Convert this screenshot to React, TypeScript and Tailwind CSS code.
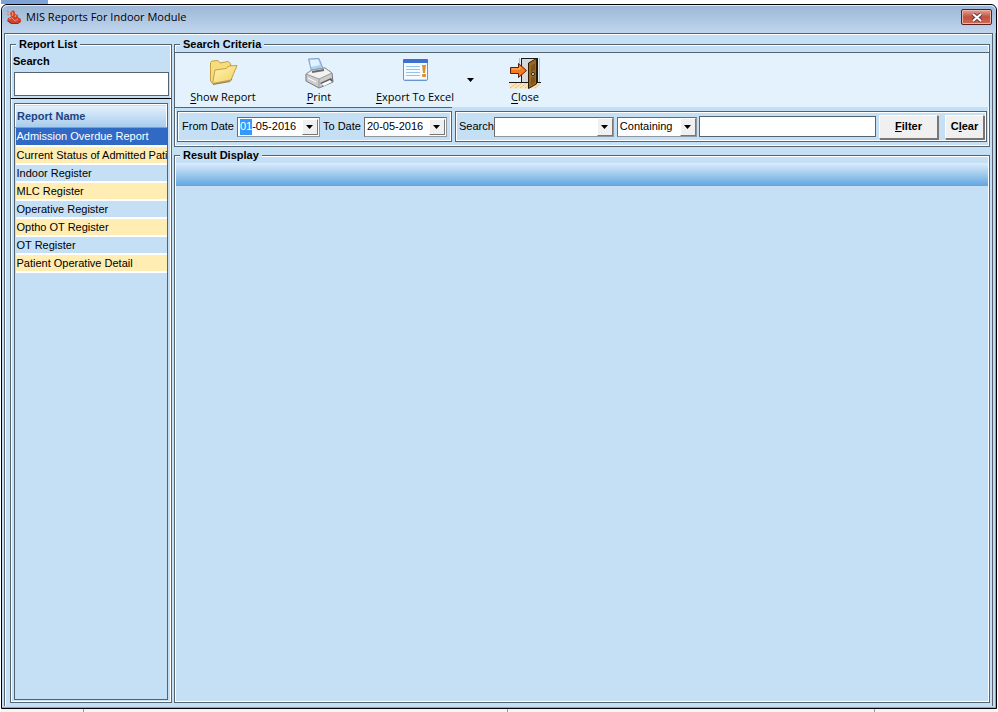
import { useEffect, useRef, useState } from "react";

const reports = [
  "Admission Overdue Report",
  "Current Status of Admitted Pati",
  "Indoor Register",
  "MLC Register",
  "Operative Register",
  "Optho OT Register",
  "OT Register",
  "Patient Operative Detail",
];

const groupBox =
  "min-w-0 border border-[#566470] shadow-[inset_0_0_0_1px_#ffffff]";
const legend = "ml-[5px] bg-[#c5dff4] px-[3px] text-[11px]/[15px] font-bold";
const sunken =
  "border border-t-[#6b6b6b] border-l-[#6b6b6b] border-r-[#8f979e] border-b-[#8f979e] bg-white";
const raised =
  "border border-t-white border-l-white border-r-[#777777] border-b-[#777777] bg-[#f0f0f0]";

function AppIcon() {
  return (
    <svg width="16" height="16" viewBox="0 0 16 16">
      <path d="M1 12 L2 9 L5 8 L4 4 L7 1 L9 3 L9 5 L12 6 L12 8 L15 10 L15 13 L12 15 L5 15 Z" fill="#d2452c" />
      <path d="M6 3 L7 5 L6 7 M10 6 L9 8" stroke="#f3a182" fill="none" />
      <path d="M3 10 L6 9 L9 12 L12 10" stroke="#ee8a6a" fill="none" />
      <path d="M1 2 L3 3 M1 5 L3 6" stroke="#d98b78" strokeWidth="1.5" />
      <path d="M2 12 L6 14.5 L12 14.5 L14 12" stroke="#98271a" fill="none" />
    </svg>
  );
}

function FolderIcon() {
  return (
    <svg width="32" height="32" viewBox="0 0 32 32">
      <defs>
        <linearGradient id="folderFront" x1="0" y1="0" x2="1" y2="1">
          <stop offset="0" stopColor="#fff6b8" />
          <stop offset="1" stopColor="#f3cf5f" />
        </linearGradient>
      </defs>
      <path d="M3.5 5.5 L5 4 L11 3.5 L13 6 L21 4.5 L23.5 6.5 L24 11 L22 24 L6 27 L3.5 24 Z" fill="#f7dc7c" stroke="#c59f45" />
      <path d="M5.5 26.5 L8 13 L19 11.5 L22 9 L30 8.5 L24 23 Z" fill="url(#folderFront)" stroke="#c59f45" />
      <path d="M6 27.5 L23 24.5 L25 22" stroke="#8f8061" fill="none" />
    </svg>
  );
}

function PrinterIcon() {
  return (
    <svg width="32" height="32" viewBox="0 0 32 32">
      <path d="M5.5 2 L16 1.5 L21 14 L9 16 Z" fill="#a9d2fa" stroke="#7d9fd0" />
      <path d="M7 3 L15 2.5 L17 8 L8 10 Z" fill="#e3f2ff" />
      <path d="M3 17 L9 13 L22 11 L29 16 L30 25 L16 31 L3 24 Z" fill="#cdcdcd" stroke="#777777" />
      <path d="M3 17 L9 13 L22 11 L29 16 L16 22 Z" fill="#f2f2f2" stroke="#999999" />
      <path d="M9 15 L21 13" stroke="#666b72" strokeWidth="2" />
      <path d="M16 22 L16 30" stroke="#999999" />
      <path d="M17 26 L28 21 L30 24 L20 29 Z" fill="#55585e" />
      <path d="M18 27 L27 23 L29 25 L21 29 Z" fill="#fafafa" />
      <path d="M5 21 L13 25" stroke="#ffffff" />
    </svg>
  );
}

function ExportIcon() {
  return (
    <svg width="32" height="32" viewBox="0 0 32 32">
      <rect x="4.5" y="2.5" width="24" height="21" rx="1.5" fill="#f5faff" stroke="#6a93d2" />
      <rect x="4" y="2" width="25" height="4" rx="1" fill="#3c6fd0" />
      <path d="M7 9.5 H21 M7 12.5 H21 M7 15.5 H21 M7 18.5 H21" stroke="#93c3e8" />
      <path d="M5 22.5 H28" stroke="#c0d8ef" />
      <path d="M23 8 H27 L26 16 H24 Z" fill="#dc912e" />
      <rect x="23" y="17" width="4" height="3" rx="1" fill="#dc912e" />
    </svg>
  );
}

function DoorIcon() {
  return (
    <svg width="32" height="32" viewBox="0 0 32 32">
      <path d="M0 26 L12 25 L32 26 L27 31.5 L1 31.5 Z" fill="#fbe5bd" />
      <path d="M1 31 L8 26 M6 31 L13 26 M11 31 L18 26 M16 31 L20 28 M26 31 L31 27" stroke="#efb565" strokeDasharray="2 1" />
      <path d="M0 25.5 H13 M28 25.5 H32" stroke="#1a1a1a" />
      <path d="M10.5 1 V8 M30.5 1 V25" stroke="#b9c0c6" />
      <rect x="12.5" y="1.5" width="16" height="24" fill="#d8d8d8" stroke="#1a1a1a" />
      <path d="M19.5 6 L27.5 1.5 V27 L19.5 31.5 Z" fill="#9a6a20" stroke="#2a1b07" />
      <path d="M22 9 L26 6 V13 L22 15 Z M22 21 L26 19 V25 L22 28 Z" fill="#80531a" />
      <circle cx="24" cy="17" r="1.5" fill="#ffffff" stroke="#1a1a1a" />
      <path d="M1.5 10.5 H9.5 V6.5 L17.5 13.5 L9.5 20.5 V16.5 H1.5 Z" fill="#f47a20" stroke="#5e1f08" />
      <path d="M3 12 H11 V10" stroke="#ffc16b" fill="none" />
    </svg>
  );
}

function Arrow() {
  return (
    <svg width="7" height="4" viewBox="0 0 7 4">
      <path d="M0 0 H7 L3.5 4 Z" fill="#000000" />
    </svg>
  );
}

type ToolButtonProps = {
  icon: React.ReactNode;
  hotkey: string;
  label: string;
};

function ToolButton({ icon, hotkey, label }: ToolButtonProps) {
  return (
    <button
      type="button"
      className="flex w-24 flex-col items-center pt-1 font-['Open_Sans',sans-serif] text-[11px]/[16px]"
    >
      {icon}
      <span className="whitespace-nowrap">
        <span className="underline underline-offset-2">{hotkey}</span>
        {label}
      </span>
    </button>
  );
}

type DateBoxProps = {
  id: string;
  label: string;
  initial: string;
  selectDay?: boolean;
};

function DateBox({ id, label, initial, selectDay }: DateBoxProps) {
  const ref = useRef<HTMLInputElement>(null);
  const [value, setValue] = useState(initial);

  // put the caret selection on the day part when the form opens
  useEffect(() => {
    if (selectDay && ref.current) {
      ref.current.focus();
      ref.current.setSelectionRange(0, 2);
    }
  }, [selectDay]);

  return (
    <div className="flex items-center gap-[3px]">
      <label htmlFor={id} className="whitespace-nowrap">
        {label}
      </label>
      <div className={`flex h-5 w-[83px] ${sunken} p-px`}>
        <input
          ref={ref}
          id={id}
          value={value}
          onChange={(e) => setValue(e.target.value)}
          className="w-0 min-w-0 flex-1 pl-px font-['Liberation_Sans',sans-serif] outline-none selection:bg-[#3399ff] selection:text-white"
        />
        <button
          type="button"
          aria-label={`Choose ${label}`}
          className={`flex w-4 items-center justify-center ${raised}`}
        >
          <Arrow />
        </button>
      </div>
    </div>
  );
}

type ComboProps = {
  id: string;
  label: string;
  options: string[];
  className: string;
};

function Combo({ id, label, options, className }: ComboProps) {
  return (
    <div className={`grid h-5 ${sunken} ${className}`}>
      <select
        id={id}
        aria-label={label}
        className="col-start-1 row-start-1 min-w-0 appearance-none pl-[2px] outline-none"
      >
        {options.map((o) => (
          <option key={o}>{o}</option>
        ))}
      </select>
      <span
        className={`pointer-events-none col-start-1 row-start-1 flex w-4 items-center justify-center justify-self-end ${raised}`}
      >
        <Arrow />
      </span>
    </div>
  );
}

function ReportList() {
  const [selected, setSelected] = useState(0);
  const [query, setQuery] = useState("");

  const rows = reports.filter((r) =>
    r.toLowerCase().includes(query.toLowerCase())
  );

  return (
    <fieldset className={`${groupBox} flex w-[162px] shrink-0 flex-col`}>
      <legend className={legend}>Report List</legend>
      <div className="flex min-h-0 flex-1 flex-col">
        <div className="border-b border-black px-[2px] pb-[2px]">
          <label
            htmlFor="report-search"
            className="block pt-[2px] text-[11px]/[14px] font-bold"
          >
            Search
          </label>
          <input
            id="report-search"
            value={query}
            onChange={(e) => setQuery(e.target.value)}
            className="mt-1 ml-px block h-6 w-[155px] border border-[#566470] bg-white px-1 outline-none"
          />
        </div>
        <div className="mx-[3px] mt-1 mb-[2px] min-h-0 flex-1 overflow-hidden border border-[#566470]">
          <table className="w-full table-fixed border-collapse">
            <thead>
              <tr>
                <th className="h-[23px] border border-white border-b-[#8f9dab] bg-linear-to-b from-[#e6f1fb] to-[#a5cbee] px-px text-left text-[11px]/[14px] font-bold text-[#1d4480]">
                  Report Name
                </th>
              </tr>
            </thead>
            <tbody>
              {rows.map((name, i) => (
                <tr
                  key={name}
                  className={
                    i === selected
                      ? "bg-[#316ac5] text-white"
                      : i % 2
                        ? "bg-[#ffedb3]"
                        : "bg-[#c5dff4]"
                  }
                >
                  <td className="h-[18px] border-b-2 border-white p-0">
                    <button
                      type="button"
                      onClick={() => setSelected(i)}
                      className="block w-full pt-px pl-px text-left text-[11px]/[15px] whitespace-nowrap"
                    >
                      {name}
                    </button>
                  </td>
                </tr>
              ))}
            </tbody>
          </table>
        </div>
      </div>
    </fieldset>
  );
}

function SearchCriteria() {
  return (
    <fieldset className={groupBox}>
      <legend className={legend}>Search Criteria</legend>
      <div className="flex h-[55px] border-t border-[#566470] bg-[#e3f2fc]">
        <ToolButton icon={<FolderIcon />} hotkey="S" label="how Report" />
        <ToolButton icon={<PrinterIcon />} hotkey="P" label="rint" />
        <ToolButton icon={<ExportIcon />} hotkey="E" label="xport To Excel" />
        <button
          type="button"
          aria-label="More export options"
          className="flex w-[14px] items-center justify-center"
        >
          <Arrow />
        </button>
        <ToolButton icon={<DoorIcon />} hotkey="C" label="lose" />
      </div>
      <div className="flex gap-[3px] px-[2px] pb-1">
        <div className="-ml-[2px] border-t border-[#566470] pt-[3px] pl-[2px]">
          <div
            className={`${groupBox} flex h-[31px] w-[275px] items-center gap-[3px] pl-1 text-[11px]`}
          >
            <DateBox id="from" label="From Date" initial="01-05-2016" selectDay />
            <DateBox id="to" label="To Date" initial="20-05-2016" />
          </div>
        </div>
        <div
          className={`${groupBox} mt-1 flex h-[31px] flex-1 items-center pr-[2px] pl-[3px] text-[11px]`}
        >
          <label htmlFor="field">Search</label>
          <Combo id="field" label="Search field" options={[""]} className="w-[120px]" />
          <Combo
            id="match"
            label="Match"
            options={["Containing", "Starting", "Equal To"]}
            className="ml-[3px] w-20"
          />
          <input
            aria-label="Search text"
            className="ml-[2px] h-[21px] min-w-0 flex-1 border border-[#566470] bg-white px-1 outline-none"
          />
          <button
            type="button"
            className={`ml-[3px] h-6 w-[59px] font-bold shadow-[1px_1px_0_#777777] ${raised}`}
          >
            <span className="underline">F</span>ilter
          </button>
          <button
            type="button"
            className={`ml-[7px] h-6 w-[39px] font-bold shadow-[1px_1px_0_#777777] ${raised}`}
          >
            C<span className="underline">l</span>ear
          </button>
        </div>
      </div>
    </fieldset>
  );
}

export default function App() {
  return (
    <div className="flex h-screen flex-col overflow-hidden bg-white px-px font-['Liberation_Sans',sans-serif] text-[11px] text-black">
      <div className="h-1 w-[47px] shrink-0 bg-[#7fa3d6]" />
      <main className="flex min-h-0 flex-1 flex-col rounded-t-md border border-black bg-[#c4dbf1] shadow-[inset_0_-1px_0_#46c3dc,inset_-1px_0_0_#46c3dc]">
        <header className="flex h-7 shrink-0 items-center rounded-t-md bg-linear-to-b from-[#9bb6d6] to-[#c0d6ee] pr-1 pb-1 pl-1 shadow-[inset_0_1px_0_#dceaf8]">
          <AppIcon />
          <h1 className="ml-1 flex-1 font-['Open_Sans',sans-serif] text-[11px]">
            MIS Reports For Indoor Module
          </h1>
          <button
            type="button"
            aria-label="Close window"
            className="flex h-4 w-[31px] items-center justify-center rounded-[2px] border border-[#5a1f1f] bg-linear-to-b from-[#e0a397] via-[#c4503f] to-[#cf6b55] shadow-[inset_0_0_0_1px_#e9b5aa]"
          >
            <svg width="12" height="9" viewBox="0 0 12 9">
              <path d="M2 1 L10 8 M10 1 L2 8" stroke="#5c3d47" strokeWidth="4" />
              <path d="M2 1 L10 8 M10 1 L2 8" stroke="#ffffff" strokeWidth="2" />
            </svg>
          </button>
        </header>
        <div className="mr-[3px] mb-[2px] ml-[2px] flex min-h-0 flex-1 gap-[2px] border-t border-r border-l border-[#566470] bg-[#c5dff4] pt-[3px] pr-[2px] pb-[3px] pl-[5px] shadow-[inset_1px_1px_0_#ffffff]">
          <ReportList />
          <div className="flex min-w-0 flex-1 flex-col gap-px">
            <SearchCriteria />
            <fieldset className={`${groupBox} flex-1`}>
              <legend className={legend}>Result Display</legend>
              <div className="mx-px h-[23px] bg-linear-to-b from-[#dcecfa] to-[#5fa6de]" />
            </fieldset>
          </div>
        </div>
      </main>
      <div className="flex h-[3px] shrink-0 bg-[#f5f5f5]">
        <div className="w-[83px] border-r border-[#999999]" />
        <div className="w-[424px] border-r border-[#999999]" />
        <div className="w-[367px] border-r border-[#999999]" />
      </div>
    </div>
  );
}
